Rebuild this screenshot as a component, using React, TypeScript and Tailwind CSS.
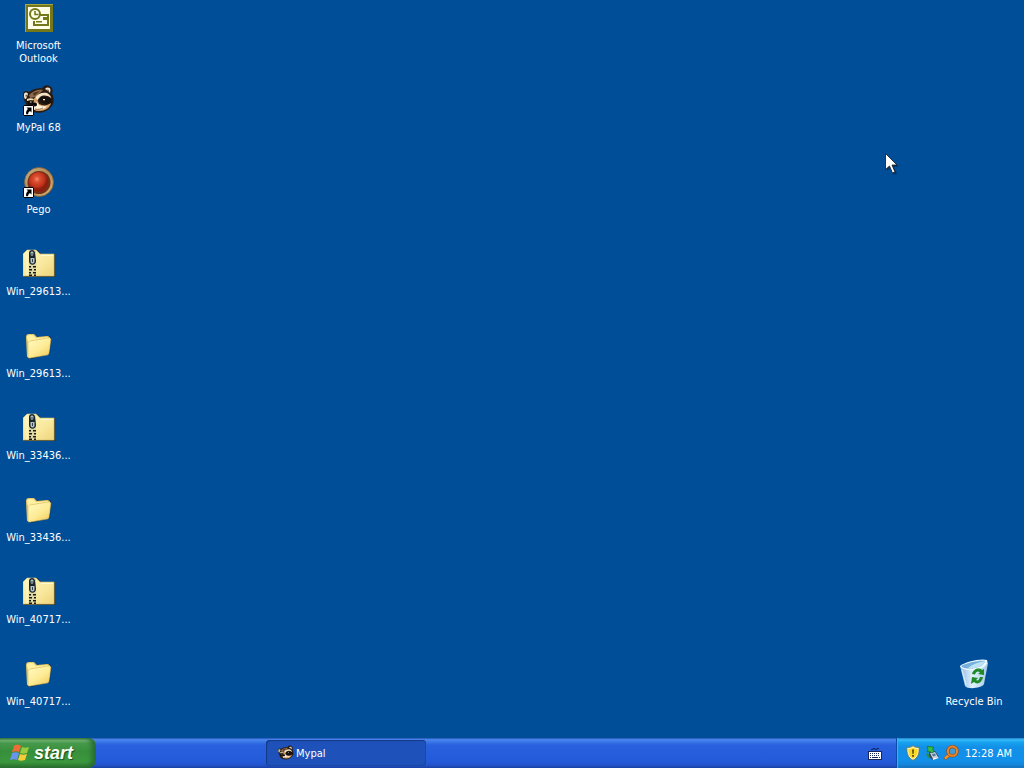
import type { ReactNode } from 'react';

function ShortcutArrow() {
  return (
    <g>
      <path d="M0 21h11v11H0z" fill="#fff" />
      <path d="M.5 21.500h10v10H.5z" fill="none" stroke="#000" />
      <path d="M3.500 23.500h5v5L7 27c-1.500.800-2 1.800-1.800 3.300H3.200c-.500-2.200.300-3.800 1.800-5.200z" fill="#000" />
    </g>
  );
}

function OutlookIcon() {
  return (
    <svg viewBox="0 0 32 32" className="size-8" aria-hidden="true">
      <path d="M2 2h28v28H2z" fill="#74781a" />
      <path d="M2 2h28v1H3v27H2z" fill="#a3a63c" />
      <path d="M5 5h22v22H5z" fill="#fdfde8" />
      <path d="M17 13h8v10H11v-4" fill="none" stroke="#74781a" strokeWidth="2" />
      <circle cx="12" cy="12" r="5" fill="#fdfde8" stroke="#74781a" strokeWidth="2" />
      <path d="M12 9v3.500h3.500" fill="none" stroke="#74781a" strokeWidth="1.600" />
      <path d="M20 15h4v3h-4zM13 19h6v1.500h-6z" fill="#74781a" />
    </svg>
  );
}

function RaccoonHead() {
  return (
    <g>
      <path d="M0 11c0-4 3-5 6-3 4-3 8-4 13-4 2-3 6-4 9-1 2 2 2 4 1 6 2 5 3 10-1 14-4 5-12 7-18 5-4-1-7-4-7-8L1 16z" fill="#2a1c13" />
      <path d="M1 11c0-3 3-3 4-1l-2 5c-2 0-2-2-2-4z" fill="#efe6d4" />
      <path d="M2.500 11l2-.500-1.500 3z" fill="#6b5545" />
      <path d="M22 5c2-2 5-2 5.500 1l-.500 3c-1-2-3-3-5-4z" fill="#efe6d4" />
      <path d="M24 5.500c2-.500 2 1 2 2z" fill="#5d483a" />
      <path d="M6 11c4-4 9-6 14-5l-7 7-6 1z" fill="#8d6a49" />
      <path d="M10 9l7-2-6 5z" fill="#4a3322" />
      <path d="M12 14c2-4 7-6 12-5 2 1 4 3 4 5-4-3-8-3-11-1l-4 5z" fill="#f5e5c3" />
      <path d="M4 15c2-1 5-1 7 0l-1 1.500-6 .500z" fill="#f2dfb9" />
      <path d="M16 15c3-3 8-3 12 0l1 4c-4 2-9 1-11-1z" fill="#17100c" />
      <path d="M4 17c3-1 5-1 7 0v4l-6 1z" fill="#17100c" />
      <path d="M20 15h2v1.200h-2zM7 17.500h1.500v1H7z" fill="#f4ead8" />
      <path d="M11 14l3 1 2 5c4 2 8 2 12-1-1 5-6 8-12 8-4 0-7-2-7-4 1-3 2-5 2-9z" fill="#d5a168" />
      <path d="M12 18c2 0 3 1 4 3 3 2 6 1 8 1-2 3-6 4-10 4-3 0-4-2-4-3z" fill="#fff2d6" />
      <path d="M9 20c1-2 5-2 5 .500s-4 3-5-.500z" fill="#0c0705" />
      <path d="M12 25c3 1 6 0 8-1" fill="none" stroke="#6e452e" strokeWidth=".800" />
    </g>
  );
}

function MyPalIcon() {
  return (
    <svg viewBox="0 0 32 32" className="size-8" aria-hidden="true">
      <RaccoonHead />
      <ShortcutArrow />
    </svg>
  );
}

function PegoIcon() {
  return (
    <svg viewBox="0 0 32 32" className="size-8" aria-hidden="true">
      <defs>
        <radialGradient id="pegRed" cx=".42" cy=".36">
          <stop offset="0" stopColor="#f58b70" />
          <stop offset=".3" stopColor="#dc4f30" />
          <stop offset=".8" stopColor="#bd301a" />
          <stop offset="1" stopColor="#8c1f0e" />
        </radialGradient>
        <linearGradient id="pegRim" x1="0" y1="0" x2="1" y2="1">
          <stop offset="0" stopColor="#cdb083" />
          <stop offset=".5" stopColor="#b08a58" />
          <stop offset="1" stopColor="#e2b56e" />
        </linearGradient>
      </defs>
      <circle cx="16" cy="16" r="14.500" fill="url(#pegRim)" stroke="#7a603a" strokeWidth=".800" />
      <circle cx="16" cy="16.500" r="11.500" fill="#74301a" />
      <circle cx="15.500" cy="16" r="10" fill="url(#pegRed)" />
      <ShortcutArrow />
    </svg>
  );
}

function ZipIcon() {
  return (
    <svg viewBox="0 0 32 32" className="size-8" aria-hidden="true">
      <defs>
        <linearGradient id="zipFace" x1="0" y1="0" x2="1" y2="1">
          <stop offset="0" stopColor="#fdf6bd" />
          <stop offset=".6" stopColor="#f8e89c" />
          <stop offset="1" stopColor="#efd27a" />
        </linearGradient>
      </defs>
      <path d="M1 6l4-4h9l4 4h14v23H1z" fill="#3d3a1e" />
      <path d="M0 6l4-4h9l4 4h14v22H0z" fill="url(#zipFace)" stroke="#cfc17a" strokeWidth=".600" />
      <path d="M18 7.500h12" stroke="#fff9cf" />
      <path d="M6 3h7v25H6z" fill="#dcd6a0" />
      <path d="M6 18h2v1.500H6zm4 0h3v1.500h-3zM6 21h3v1.500H6zm5 0h2v1.500h-2zM6 24h2v1.500H6zm4 0h3v1.500h-3zM6 26.500h3V28H6zm5 0h2V28h-2z" fill="#171b1e" />
      <path d="M6 5c0-4 6-4 6 0l1 8c0 5-7 5-7 0z" fill="#17252e" />
      <path d="M7.500 5c0-2 3-2 3 0l-.500 3H8zM7.500 10h4v4c-1 2-3 2-4 0z" fill="#b9c3c2" />
      <path d="M8.500 5h1v3h-1zM9 11h1v3H9z" fill="#31434e" />
      <path d="M4 4v23" stroke="#fff8cb" />
    </svg>
  );
}

function FolderIcon() {
  return (
    <svg viewBox="0 0 32 32" className="size-8" aria-hidden="true">
      <defs>
        <linearGradient id="folderFace" x1="0" y1="0" x2=".8" y2="1">
          <stop offset="0" stopColor="#fffbc5" />
          <stop offset=".6" stopColor="#fdeb94" />
          <stop offset="1" stopColor="#f3ce61" />
        </linearGradient>
      </defs>
      <path d="M4 8c0-2 1-3 3-3h5l3 2 11-1c2 0 2 1 2 3l-1 15-19 5-3-3z" fill="#06213d" opacity=".7" />
      <path d="M3 7c0-2 1-3 3-3h5l3 3 10-1c2 0 3 1 3 2v11L6 27H4z" fill="#e5c668" />
      <path d="M4 7c0-1 1-2 2-2h4l3 3 11-1c1 0 1 1 1 2L5 12z" fill="#fff0a2" />
      <path d="M5 13c0-1 1-1.500 2-2l18-3c2 0 3 0 2.800 2l-1.800 13c0 1-1 2-2 2L7 28c-1 0-2 0-2-1z" fill="url(#folderFace)" stroke="#d8b350" strokeWidth=".600" />
    </svg>
  );
}

function RecycleIcon() {
  return (
    <svg viewBox="0 0 32 32" className="size-8" aria-hidden="true">
      <defs>
        <linearGradient id="binFace">
          <stop offset="0" stopColor="#8fb9e3" />
          <stop offset=".45" stopColor="#e0f1fd" />
          <stop offset="1" stopColor="#a4c9e8" />
        </linearGradient>
      </defs>
      <path d="M2 8l26-5 2 2-4 21c-2 4-16 6-19 2z" fill="url(#binFace)" />
      <path d="M2 8C6 4 23 0 29 2c2 4-4 9-11 10C12 13 3 12 2 8z" fill="#edf9ff" />
      <path d="M3 8c5-3 19-6 24-5-1 4-5 6-10 7C12 11 5 11 3 8z" fill="#75b0dc" />
      <path d="M10 10c5-4 10-6 17-7-1 5-9 8-17 7z" fill="#bce2f4" />
      <g fill="#218a28">
        <path d="M14 16c1-5 7-7 10-4l2-1v6l-6-1 2-1.500c-2-2-4-1-5 2z" />
        <path d="M25 19c-1 6-6 8-9 5l-3 2 1-7 6 1-2 2c2 1 3 0 4-3z" />
      </g>
      <path d="M4 12l4 15" stroke="#ddf3ff" strokeWidth="1" />
    </svg>
  );
}

function DesktopItem({ icon, label, narrow }: { icon: ReactNode; label: string; narrow?: boolean }) {
  return (
    <button className="flex h-[82px] w-full flex-col items-center gap-[5px] pt-0.5">
      {icon}
      <span className={narrow ? 'w-14 text-center' : 'text-center whitespace-nowrap'}>{label}</span>
    </button>
  );
}

function WindowsFlag() {
  return (
    <svg viewBox="0 0 20 20" className="size-5" aria-hidden="true">
      <path d="M4 3c3-2 5-1 7 0L9 9C7 8 5 8 2 9z" fill="#f16b34" />
      <path d="M12 4c2 1 4 1 7 0l-2 6c-3 1-5 1-7 0z" fill="#9acb3b" />
      <path d="M2 10c3-1 5-1 7 0l-2 7c-2-1-4-1-7 0z" fill="#6794ed" />
      <path d="M10 11c2 1 4 1 7 0l-2 6c-3 1-5 1-7 0z" fill="#f5cc39" />
    </svg>
  );
}

function KeyboardIcon() {
  return (
    <svg viewBox="0 0 14 14" className="size-3.5" aria-hidden="true">
      <path d="M3 3.500h2v-1h2v1h2v-1h2" fill="none" stroke="#102965" />
      <path d="M0 5h14v9H0z" fill="#14265c" />
      <path d="M1 6h12v7H1z" fill="#fff" />
      <path d="M2 7.500h10M2 9.500h10" stroke="#14265c" strokeDasharray="1 1" />
      <path d="M2 11.500h1M4 11.500h6M11 11.500h1" stroke="#14265c" />
    </svg>
  );
}

function ShieldIcon() {
  return (
    <svg viewBox="0 0 16 16" className="size-4" aria-hidden="true">
      <path d="M8 .800c2 1.500 4 2 6 1.500.500 6-1 10.500-6 13C3 12.800 1.500 8 2 2.300c2 .500 4 0 6-1.500z" fill="#fff6c8" stroke="#77723b" strokeWidth=".800" />
      <path d="M8 2.500c2 1 3 1.500 4.700 1.500 0 5-1 7.500-4.700 9.800C4.300 11.500 3.300 9 3.300 4 5 4 6 3.500 8 2.500z" fill="#fbd826" />
      <path d="M7.200 4.500h1.600l-.300 4.500h-1zM7.200 10h1.600v1.700H7.200z" fill="#36310d" />
    </svg>
  );
}

function SafeRemoveIcon() {
  return (
    <svg viewBox="0 0 16 16" className="size-4" aria-hidden="true">
      <path d="M5 7l6-1 4 6-6 3-4-3z" fill="#35455e" />
      <path d="M6 8l5-1 3 5-5 2z" fill="#c6d3de" />
      <path d="M8 9l3-.500 1 2-3 1z" fill="#54799c" />
      <path d="M9 13.500l5-1.500.500 1L9 15z" fill="#fff" />
      <path d="M3 1.500l7 .500-1.500 2L10 6.500 7.500 8 5.500 6 3 7l1-3z" fill="#35bd45" stroke="#176d28" strokeWidth=".700" />
      <path d="M2 9l2-1 2 4-2 1z" fill="#27913c" />
    </svg>
  );
}

function MagnifierIcon() {
  return (
    <svg viewBox="0 0 16 16" className="size-4" aria-hidden="true">
      <path d="M7 9l-5.500 5" stroke="#93531c" strokeWidth="3.600" />
      <path d="M7 9l-5 4.500" stroke="#ef9431" strokeWidth="2.400" />
      <circle cx="9.500" cy="6.200" r="4.600" fill="#3f9bd2" stroke="#984711" strokeWidth="3.200" />
      <circle cx="9.500" cy="6.200" r="4.600" fill="none" stroke="#ee8627" strokeWidth="2" />
    </svg>
  );
}

const items = [
  { icon: <OutlookIcon />, label: 'Microsoft Outlook', narrow: true },
  { icon: <MyPalIcon />, label: 'MyPal 68' },
  { icon: <PegoIcon />, label: 'Pego' },
  { icon: <ZipIcon />, label: 'Win_29613...' },
  { icon: <FolderIcon />, label: 'Win_29613...' },
  { icon: <ZipIcon />, label: 'Win_33436...' },
  { icon: <FolderIcon />, label: 'Win_33436...' },
  { icon: <ZipIcon />, label: 'Win_40717...' },
  { icon: <FolderIcon />, label: 'Win_40717...' },
];

export default function App() {
  return (
    <div className="relative flex min-h-screen flex-col overflow-hidden bg-[#004e98] font-['Tahoma','DejaVu_Sans_Condensed','DejaVu_Sans',sans-serif] text-[11px] leading-[13px] text-white select-none">
      <main className="flex flex-1 items-start justify-between">
        <div className="w-[77px]">
          {items.map((item, i) => (
            <DesktopItem key={i} {...item} />
          ))}
        </div>
        <div className="w-[100px] self-end">
          <DesktopItem icon={<RecycleIcon />} label="Recycle Bin" />
        </div>
      </main>

      <footer className="flex h-[30px] bg-[linear-gradient(to_bottom,#2453b8_0%,#4b8bf0_6%,#3b78e8_12%,#2960dd_24%,#245bdb_75%,#2454cc_90%,#1941a5_100%)]">
        <button className="flex w-24 items-center gap-1 rounded-r-lg bg-[linear-gradient(to_bottom,#377a38_0%,#78b978_7%,#45994a_18%,#388f3b_45%,#3b983e_80%,#2a702d_100%)] pl-2.5 shadow-[inset_-4px_0_5px_#276a35]">
          <WindowsFlag />
          <span className="font-['Liberation_Sans',sans-serif] text-[18px] leading-5 font-bold text-[#fbfff4] italic [text-shadow:1px_1px_1px_#1d4d20]">start</span>
        </button>
        <div className="flex flex-1 items-center justify-between pr-3.5 pl-[170px]">
          <button className="flex h-[26px] w-40 items-center gap-0.5 rounded-sm bg-[#1e51b9] pl-3 shadow-[inset_1px_1px_1px_#143984,inset_-1px_-1px_0_#1b48a5]">
            <svg viewBox="0 0 32 32" className="size-4" aria-hidden="true">
              <RaccoonHead />
            </svg>
            Mypal
          </button>
          <button aria-label="Keyboard">
            <KeyboardIcon />
          </button>
        </div>
        <div className="flex w-32 items-center bg-[linear-gradient(to_bottom,#1c77ca_0%,#38bdf5_6%,#19a2ef_14%,#1290e8_30%,#128fe9_75%,#1684d9_90%,#116bb7_100%)] pr-3 pl-[9px] shadow-[inset_1px_0_0_#0c4ca9,inset_2px_0_1px_#35b7f5]">
          <div className="flex flex-1 gap-[3px]">
            <ShieldIcon />
            <SafeRemoveIcon />
            <MagnifierIcon />
          </div>
          <time className="whitespace-nowrap">12:28 AM</time>
        </div>
      </footer>

      <svg viewBox="0 0 14 22" className="pointer-events-none absolute top-[153px] left-[885px] h-[22px] w-3.5" aria-hidden="true">
        <path d="M2 3v15l4-3 3 7 3-1-3-7h5z" fill="#001f46" opacity=".5" />
        <path d="M.500.500v16l4-3.500 3 7 2.500-1-3-7h5z" fill="#fff" stroke="#101820" strokeWidth=".800" />
      </svg>
    </div>
  );
}
